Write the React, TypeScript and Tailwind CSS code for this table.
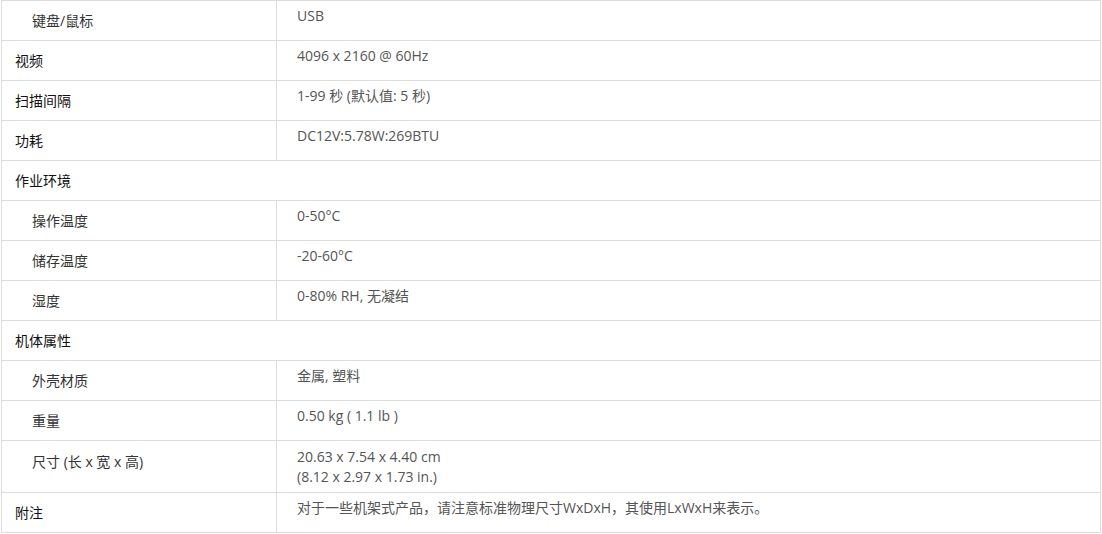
const FONT = { fontFamily: '"Open Sans", "Noto Sans CJK SC", sans-serif' };

type Row =
  | { kind: "group"; label: string }
  | { kind: "item"; label: string; sub?: boolean; value: string[]; tall?: boolean };

const ROWS: Row[] = [
  { kind: "item", label: "键盘/鼠标", sub: true, value: ["USB"] },
  { kind: "item", label: "视频", value: ["4096 x 2160 @ 60Hz"] },
  { kind: "item", label: "扫描间隔", value: ["1-99 秒 (默认值: 5 秒)"] },
  { kind: "item", label: "功耗", value: ["DC12V:5.78W:269BTU"] },
  { kind: "group", label: "作业环境" },
  { kind: "item", label: "操作温度", sub: true, value: ["0-50°C"] },
  { kind: "item", label: "储存温度", sub: true, value: ["-20-60°C"] },
  { kind: "item", label: "湿度", sub: true, value: ["0-80% RH, 无凝结"] },
  { kind: "group", label: "机体属性" },
  { kind: "item", label: "外壳材质", sub: true, value: ["金属, 塑料"] },
  { kind: "item", label: "重量", sub: true, value: ["0.50 kg ( 1.1 lb )"] },
  {
    kind: "item",
    label: "尺寸 (长 x 宽 x 高)",
    sub: true,
    value: ["20.63 x 7.54 x 4.40 cm", "(8.12 x 2.97 x 1.73 in.)"],
    tall: true,
  },
  { kind: "item", label: "附注", value: ["对于一些机架式产品，请注意标准物理尺寸WxDxH，其使用LxWxH来表示。"] },
];

export default function App() {
  return (
    <div className="w-[1102px] h-[534px] bg-white pl-px" style={FONT}>
      <div className="w-[1100px] border-x border-b border-[#dddddd] text-[14px] leading-[20px]">
        {ROWS.map((r, i) =>
          r.kind === "group" ? (
            <div key={i} className="h-[40px] flex items-center pl-[13px] text-[#111] border-t border-[#dddddd]">
              {r.label}
            </div>
          ) : (
            <div key={i} className={`flex border-t border-[#dddddd] ${r.tall ? "h-[52px]" : "h-[40px]"}`}>
              <div
                className={`w-[275px] shrink-0 border-r border-[#dddddd] ${
                  r.sub ? "pl-[30px] text-[#333]" : "pl-[13px] text-[#111]"
                } ${r.tall ? "pt-[11px]" : "pt-[10px]"}`}
              >
                {r.label}
              </div>
              <div className={`pl-[20px] text-[#555] ${r.tall ? "pt-[6px]" : "pt-[5px]"}`}>
                {r.value.map((v) => (
                  <div key={v}>{v}</div>
                ))}
              </div>
            </div>
          )
        )}
      </div>
    </div>
  );
}
